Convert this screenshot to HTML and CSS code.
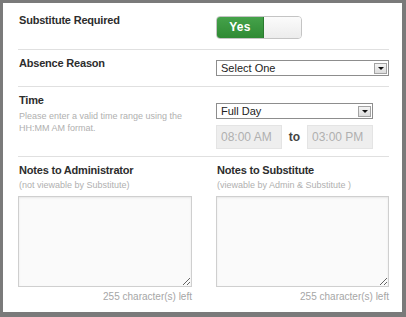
FILE: index.html
```html
<!DOCTYPE html>
<html>
<head>
<meta charset="utf-8">
<link rel="stylesheet" href="styles.css">
</head>
<body>
<div class="panel">
  <div class="row row-sub">
    <div class="label">Substitute Required</div>
    <div class="toggle"><span class="toggle-on">Yes</span><span class="toggle-off"></span></div>
  </div>
  <div class="row row-reason">
    <div class="label">Absence Reason</div>
    <div class="select select-wide"><span class="select-text">Select One</span><span class="select-arrow"><span class="tri"></span></span></div>
  </div>
  <div class="row row-time">
    <div>
      <div class="label">Time</div>
      <div class="hint">Please enter a valid time range using the<br>HH:MM AM format.</div>
    </div>
    <div class="time-col">
      <div class="select select-day"><span class="select-text">Full Day</span><span class="select-arrow"><span class="tri"></span></span></div>
      <div class="time-range">
        <input class="time-input" type="text" value="08:00 AM" disabled>
        <span class="to">to</span>
        <input class="time-input" type="text" value="03:00 PM" disabled>
      </div>
    </div>
  </div>
  <div class="row row-notes">
    <div class="note note-admin">
      <div class="label">Notes to Administrator</div>
      <div class="sub">(not viewable by Substitute)</div>
      <textarea class="notes"></textarea>
      <div class="count">255 character(s) left</div>
    </div>
    <div class="note note-sub">
      <div class="label">Notes to Substitute</div>
      <div class="sub">(viewable by Admin &amp; Substitute )</div>
      <textarea class="notes"></textarea>
      <div class="count">255 character(s) left</div>
    </div>
  </div>
</div>
</body>
</html>
```

FILE: styles.css
```css
html, body {
  margin: 0;
  padding: 0;
  background: #7a7a7a;
  font-family: "Liberation Sans", Arial, sans-serif;
}
body {
  padding: 3px 4px 5px 3px;
  width: 406px;
  height: 317px;
  box-sizing: border-box;
}
.panel {
  background: #ffffff;
  height: 309px;
  padding: 0 13px 0 15px;
  box-sizing: border-box;
}
.row {
  display: grid;
  grid-template-columns: 198px 1fr;
  align-items: start;
}
.row + .row {
  border-top: 1px solid #e0e0e0;
}
.label {
  font-size: 11px;
  font-weight: bold;
  line-height: 13px;
  color: #2d2d2d;
  letter-spacing: -0.2px;
  padding-left: 1px;
}
.row-sub {
  padding: 11px 0 10px;
}
.toggle {
  margin-top: 2px;
  width: 86px;
  height: 23px;
  box-sizing: border-box;
  display: flex;
  border: 1px solid #c4c4c4;
  border-radius: 4px;
  overflow: hidden;
}
.toggle-on {
  width: 46px;
  background: linear-gradient(#45a24a, #2f8a34);
  border-right: 1px solid #2a7a2e;
  color: #ffffff;
  font-weight: bold;
  font-size: 12px;
  line-height: 21px;
  text-align: center;
  letter-spacing: 0.3px;
}
.toggle-off {
  flex: 1;
  background: linear-gradient(#fbfbfb, #ececec);
}
.row-reason {
  padding: 7px 0 10px;
}
.select {
  height: 16px;
  box-sizing: border-box;
  border: 1px solid #8d8d8d;
  background: #ffffff;
  display: flex;
  align-items: center;
  justify-content: space-between;
  font-size: 11px;
  color: #222;
}
.select-wide {
  margin-top: 3px;
  width: 173px;
}
.select-text {
  padding-left: 4px;
}
.select-arrow {
  width: 13px;
  height: 11px;
  box-sizing: border-box;
  margin-right: 1px;
  border: 1px solid #a3a3a3;
  background: linear-gradient(#f4f4f4, #dcdcdc);
  display: flex;
  align-items: center;
  justify-content: center;
}
.tri {
  width: 0;
  height: 0;
  border-left: 3px solid transparent;
  border-right: 3px solid transparent;
  border-top: 3px solid #111;
}
.row-time {
  padding: 7px 0 7px;
}
.hint {
  margin-top: 3px;
  font-size: 9px;
  line-height: 12px;
  color: #b0b0b0;
  padding-left: 1px;
}
.time-col {
  margin-top: 9px;
}
.select-day {
  width: 157px;
}
.time-range {
  margin-top: 6px;
  display: flex;
  align-items: center;
}
.time-input {
  width: 66px;
  height: 24px;
  box-sizing: border-box;
  margin: 0;
  border: 1px solid #e4e4e4;
  background: #eeeeee;
  color: #b0b0b0;
  font-family: "Liberation Sans", Arial, sans-serif;
  font-size: 12px;
  padding: 0 0 0 4px;
  outline: none;
}
.to {
  width: 25px;
  text-align: center;
  font-size: 12px;
  font-weight: bold;
  color: #444;
}
.row-notes {
  padding: 7px 0 0;
}
.sub {
  margin-top: 2px;
  font-size: 9px;
  line-height: 12px;
  color: #b0b0b0;
  padding-left: 1px;
}
.notes {
  display: block;
  margin: 5px 0 0;
  height: 91px;
  box-sizing: border-box;
  border: 1px solid #cfcfcf;
  background: #fafafa;
  box-shadow: inset 0 1px 2px rgba(0,0,0,0.08);
  resize: both;
  padding: 2px;
}
.note-admin .notes,
.note-admin .count {
  width: 174px;
}
.note-sub .notes,
.note-sub .count {
  width: 173px;
}
.count {
  margin-top: 4px;
  font-size: 10px;
  line-height: 12px;
  color: #a6a6a6;
  text-align: right;
}
```
